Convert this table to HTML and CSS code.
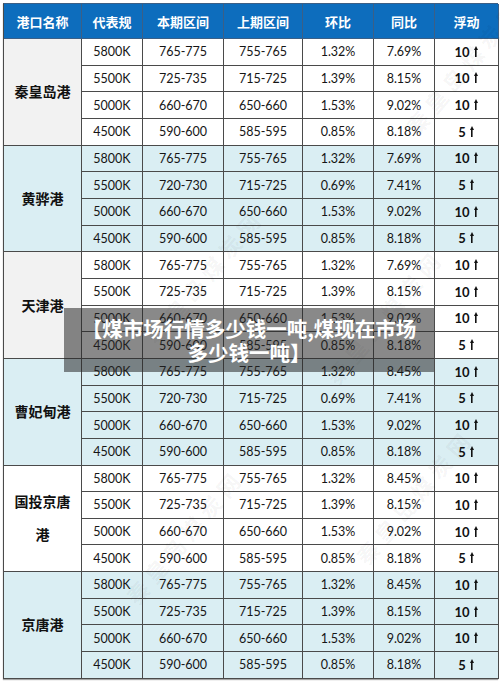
FILE: index.html
```html
<!DOCTYPE html>
<html lang="zh">
<head>
<meta charset="utf-8">
<link rel="stylesheet" href="styles.css">
</head>
<body>
<div class="wrap">
<div class="price">
<div class="hd">港口名称</div><div class="hd">代表规</div><div class="hd">本期区间</div><div class="hd">上期区间</div><div class="hd">环比</div><div class="hd">同比</div><div class="hd">浮动</div>
<div class="grp white">
<div class="port grey">秦皇岛港</div><div>5800K</div><div>765-775</div><div>755-765</div><div>1.32%</div><div>7.69%</div><div class="up">10 <i class="ar"></i></div>
<div>5500K</div><div>725-735</div><div>715-725</div><div>1.39%</div><div>8.15%</div><div class="up">10 <i class="ar"></i></div>
<div>5000K</div><div>660-670</div><div>650-660</div><div>1.53%</div><div>9.02%</div><div class="up">10 <i class="ar"></i></div>
<div>4500K</div><div>590-600</div><div>585-595</div><div>0.85%</div><div>8.18%</div><div class="up">5 <i class="ar"></i></div>
</div>
<div class="grp blue">
<div class="port">黄骅港</div><div>5800K</div><div>765-775</div><div>755-765</div><div>1.32%</div><div>7.69%</div><div class="up">10 <i class="ar"></i></div>
<div>5500K</div><div>720-730</div><div>715-725</div><div>0.69%</div><div>7.41%</div><div class="up">5 <i class="ar"></i></div>
<div>5000K</div><div>660-670</div><div>650-660</div><div>1.53%</div><div>9.02%</div><div class="up">10 <i class="ar"></i></div>
<div>4500K</div><div>590-600</div><div>585-595</div><div>0.85%</div><div>8.18%</div><div class="up">5 <i class="ar"></i></div>
</div>
<div class="grp white">
<div class="port grey">天津港</div><div>5800K</div><div>765-775</div><div>755-765</div><div>1.32%</div><div>7.69%</div><div class="up">10 <i class="ar"></i></div>
<div>5500K</div><div>725-735</div><div>715-725</div><div>1.39%</div><div>8.15%</div><div class="up">10 <i class="ar"></i></div>
<div>5000K</div><div>660-670</div><div>650-660</div><div>1.53%</div><div>9.02%</div><div class="up">10 <i class="ar"></i></div>
<div>4500K</div><div>590-600</div><div>585-595</div><div>0.85%</div><div>8.18%</div><div class="up">5 <i class="ar"></i></div>
</div>
<div class="grp blue">
<div class="port">曹妃甸港</div><div>5800K</div><div>765-775</div><div>755-765</div><div>1.32%</div><div>8.45%</div><div class="up">10 <i class="ar"></i></div>
<div>5500K</div><div>720-730</div><div>715-725</div><div>0.69%</div><div>7.41%</div><div class="up">5 <i class="ar"></i></div>
<div>5000K</div><div>660-670</div><div>650-660</div><div>1.53%</div><div>9.02%</div><div class="up">10 <i class="ar"></i></div>
<div>4500K</div><div>590-600</div><div>585-595</div><div>0.85%</div><div>8.18%</div><div class="up">5 <i class="ar"></i></div>
</div>
<div class="grp white">
<div class="port">国投京唐<br>港</div><div>5800K</div><div>765-775</div><div>755-765</div><div>1.32%</div><div>8.45%</div><div class="up">10 <i class="ar"></i></div>
<div>5500K</div><div>725-735</div><div>715-725</div><div>1.39%</div><div>8.15%</div><div class="up">10 <i class="ar"></i></div>
<div>5000K</div><div>660-670</div><div>650-660</div><div>1.53%</div><div>9.02%</div><div class="up">10 <i class="ar"></i></div>
<div>4500K</div><div>590-600</div><div>585-595</div><div>0.85%</div><div>8.18%</div><div class="up">5 <i class="ar"></i></div>
</div>
<div class="grp blue">
<div class="port">京唐港</div><div>5800K</div><div>765-775</div><div>755-765</div><div>1.32%</div><div>8.45%</div><div class="up">10 <i class="ar"></i></div>
<div>5500K</div><div>725-735</div><div>715-725</div><div>1.39%</div><div>8.15%</div><div class="up">10 <i class="ar"></i></div>
<div>5000K</div><div>660-670</div><div>650-660</div><div>1.53%</div><div>9.02%</div><div class="up">10 <i class="ar"></i></div>
<div>4500K</div><div>590-600</div><div>585-595</div><div>0.85%</div><div>8.18%</div><div class="up">5 <i class="ar"></i></div>
</div>
</div>
<div class="wm wm1">秦皇岛煤炭网</div>
<div class="wm wm2">秦皇岛煤炭网</div>
<div class="wm wm3">秦皇岛煤炭网</div>
<div class="wm wm4">秦皇岛煤炭网</div>
<div class="wm wm5">秦皇岛煤炭网</div>
<div class="caption">【煤市场行情多少钱一吨,煤现在市场<br>多少钱一吨】</div>
</div>
</body>
</html>
```
FILE: styles.css
```css
html, body {
  margin: 0;
  padding: 0;
  background: #ffffff;
}
.wrap {
  position: relative;
  width: 500px;
  height: 682px;
  overflow: hidden;
}
.price {
  margin: 3px 0 0 3px;
  width: 495px;
  box-sizing: border-box;
  display: grid;
  grid-template-columns: 78px 61px 81px 79px 71px 61px 64px;
  grid-template-rows: 35px repeat(24, 26.67px);
  border-left: 1px solid #4a4a4a;
  border-top: 1px solid #3b5f86;
  box-shadow: 0 1px 1px rgba(0, 0, 0, 0.35);
  font-family: "Lato", "Noto Sans CJK SC", sans-serif;
  font-size: 12.5px;
  color: #151515;
}
.grp { display: contents; }
.price .hd,
.grp > div {
  box-sizing: border-box;
  display: flex;
  align-items: center;
  justify-content: center;
  text-align: center;
  border-right: 1px solid #4a4a4a;
  border-bottom: 1px solid #4a4a4a;
}
.price .hd {
  background: #0d6dbd;
  color: #ffffff;
  font-family: "Noto Sans CJK SC", sans-serif;
  font-weight: 700;
  font-size: 13px;
  border-right-color: #3b5f86;
  border-bottom-color: #3b5f86;
}
.white > div { background: #ffffff; }
.blue > div { background: #daeef3; }
.white > div.grey { background: #f2f2f2; }
.grp > .port {
  grid-row: span 4;
  grid-column: 1;
  font-family: "Noto Sans CJK SC", sans-serif;
  font-weight: 700;
  font-size: 14px;
  color: #111111;
  line-height: 33px;
}
.grp > .up {
  font-weight: 700;
  font-size: 13px;
  color: #111111;
}
.ar {
  display: inline-block;
  width: 5px;
  height: 11px;
  margin-left: 4px;
  margin-top: -1px;
  background:
    linear-gradient(#111, #111) center 2px / 1.6px 9px no-repeat;
  position: relative;
}
.ar::before {
  content: "";
  position: absolute;
  left: 0;
  top: 0;
  border-left: 2.5px solid transparent;
  border-right: 2.5px solid transparent;
  border-bottom: 4px solid #111;
}
.wm {
  position: absolute;
  font-family: "Noto Sans CJK SC", sans-serif;
  font-size: 22px;
  font-weight: 700;
  color: rgba(0, 0, 0, 0.05);
  transform: rotate(-50deg);
  white-space: nowrap;
  letter-spacing: 6px;
  pointer-events: none;
}
.wm1 { left: 380px; top: 50px; }
.wm2 { left: 120px; top: 260px; }
.wm3 { left: 300px; top: 300px; }
.wm4 { left: 330px; top: 480px; }
.wm5 { left: 100px; top: 520px; }
.caption {
  position: absolute;
  left: 64px;
  top: 308px;
  width: 370px;
  height: 64px;
  box-sizing: border-box;
  padding-top: 8px;
  background: rgba(40, 40, 40, 0.55);
  color: #ffffff;
  font-family: "Noto Sans CJK SC", sans-serif;
  font-weight: 700;
  font-size: 20.5px;
  line-height: 24px;
  text-align: center;
}
```
